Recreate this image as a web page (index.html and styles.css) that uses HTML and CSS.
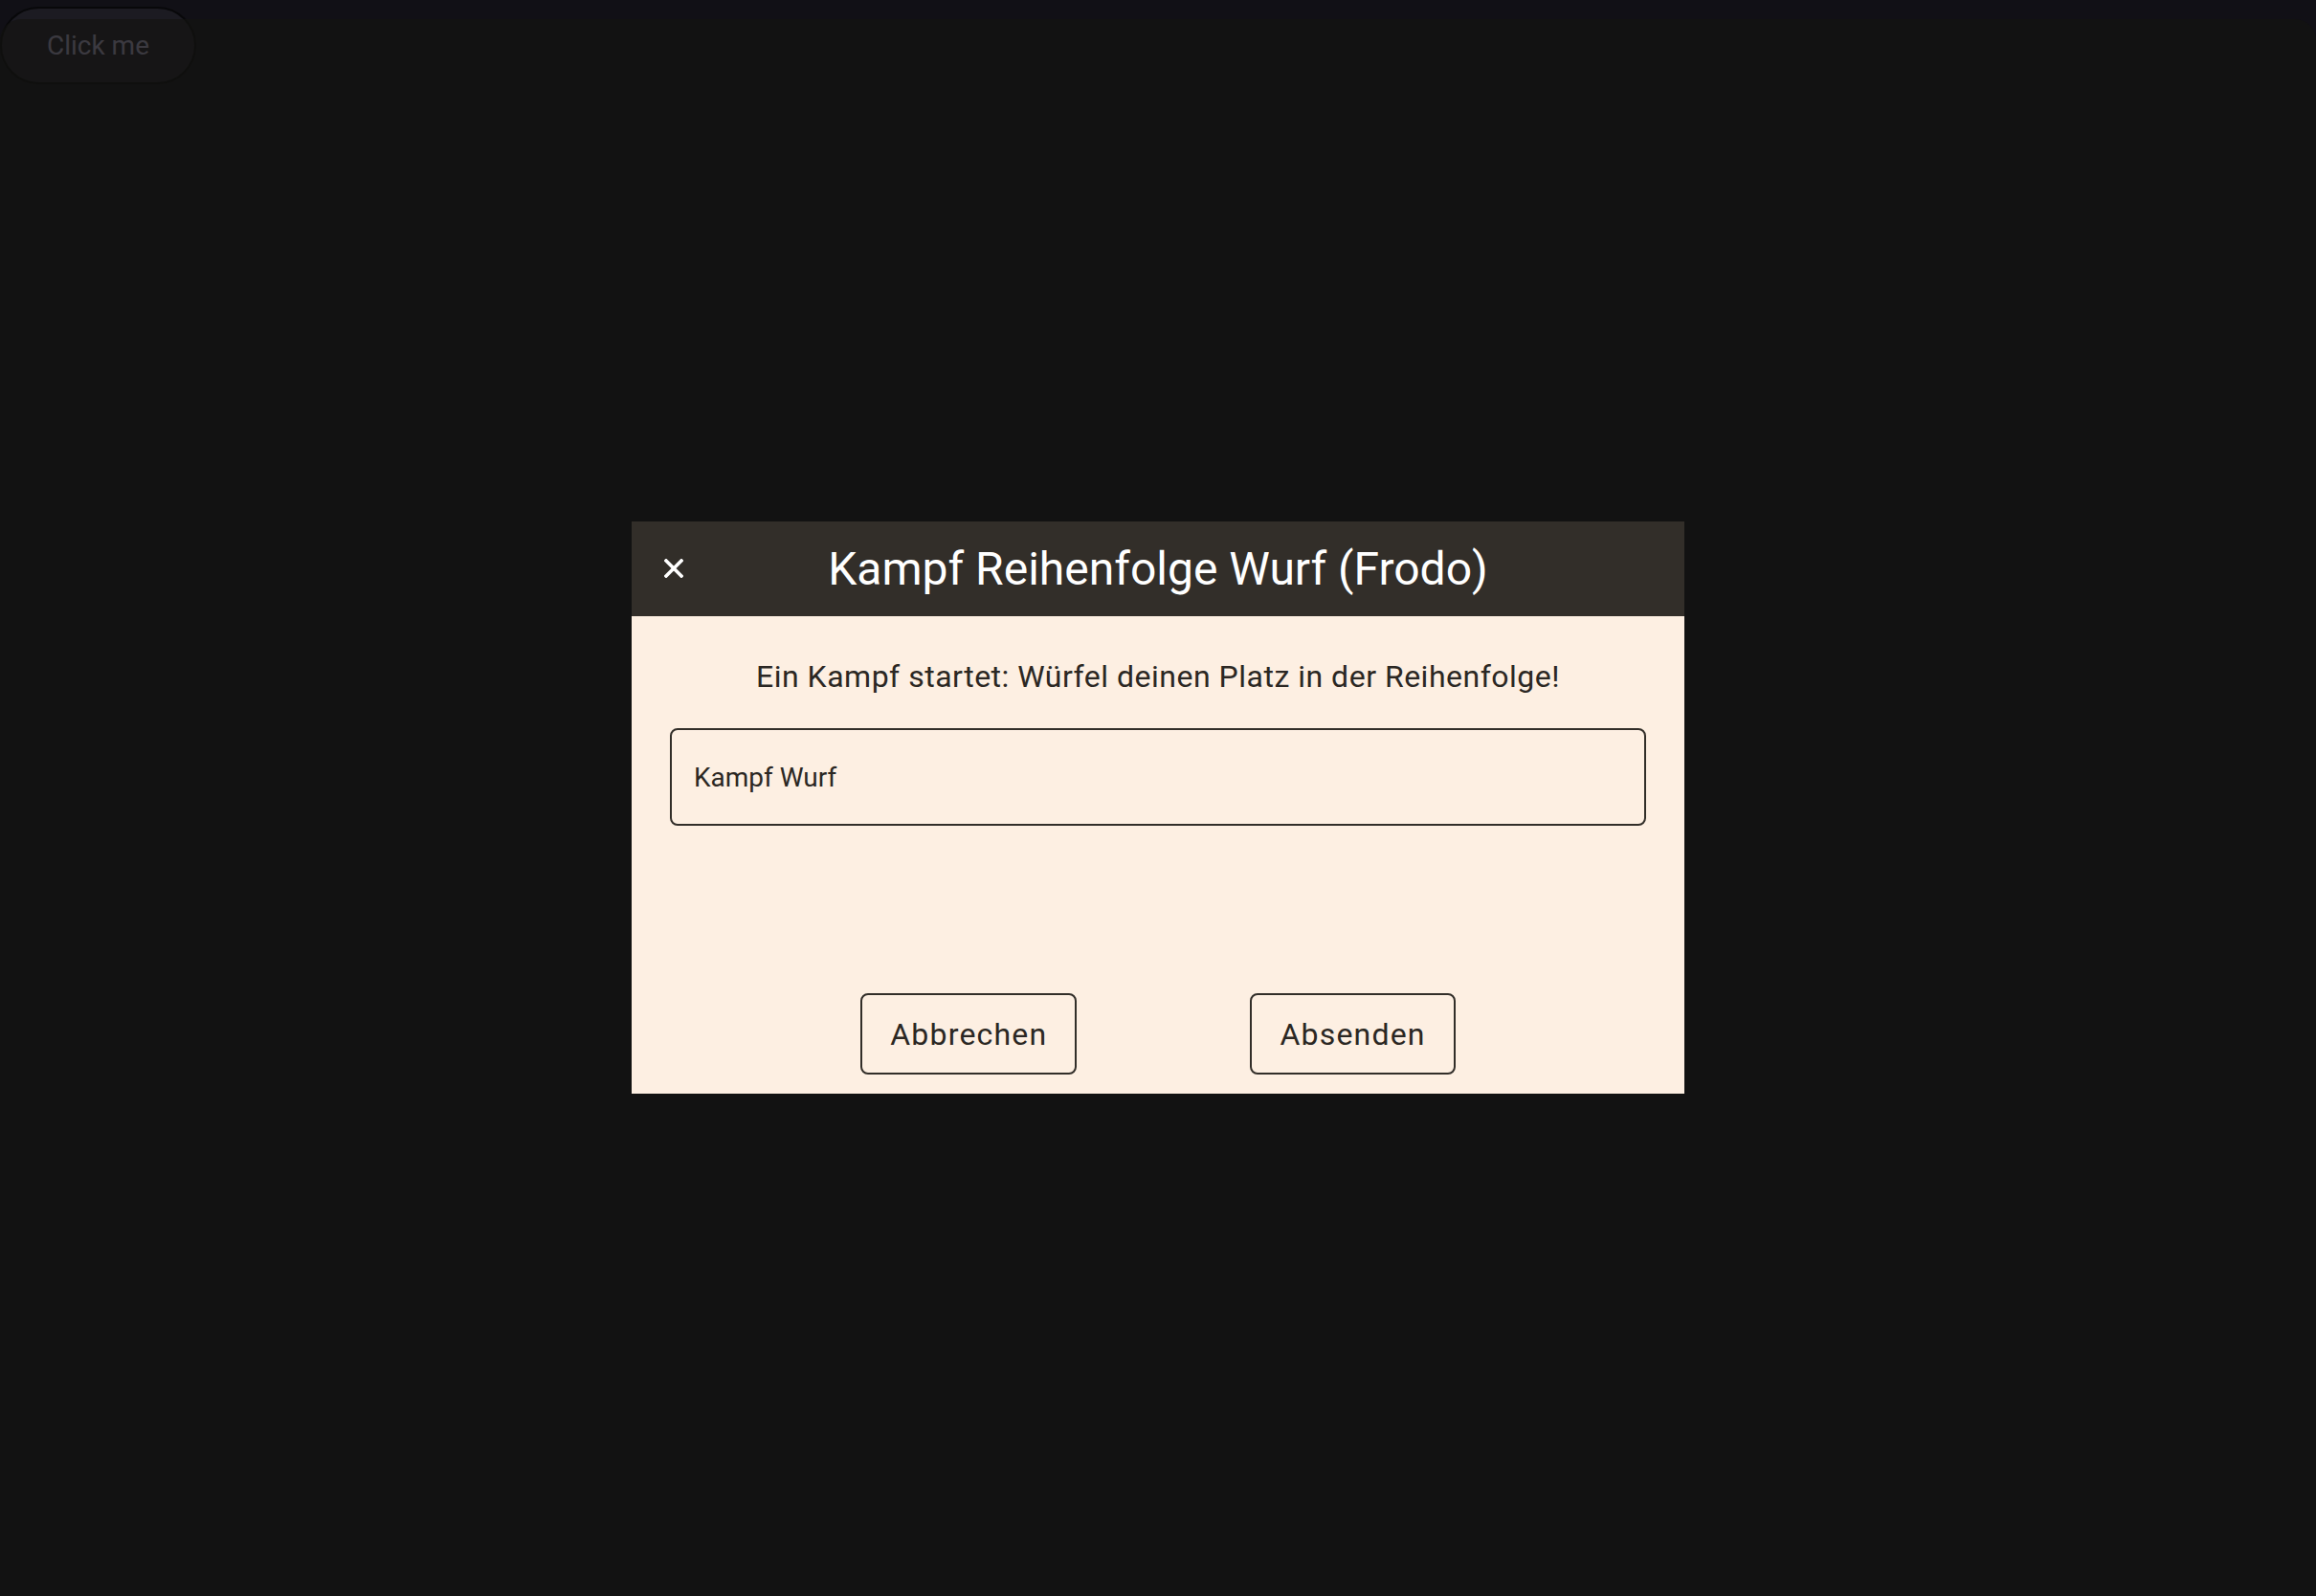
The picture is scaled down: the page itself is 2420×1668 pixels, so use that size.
FILE: index.html
```html
<!DOCTYPE html>
<html lang="de">
<head>
<meta charset="utf-8">
<title>Kampf Reihenfolge Wurf</title>
<link rel="stylesheet" href="styles.css">
</head>
<body>
<button class="trigger">Click me</button>
<div class="backdrop">
  <div class="dialog">
    <div class="dialog-header">
      <button class="close" aria-label="Schließen">
        <svg width="20" height="20" viewBox="0 0 20 20"><path d="M2 2 L18 18 M18 2 L2 18" stroke="#ffffff" stroke-width="3.6" stroke-linecap="square" fill="none"/></svg>
      </button>
      <h1 class="title">Kampf Reihenfolge Wurf (Frodo)</h1>
    </div>
    <div class="dialog-body">
      <p class="message">Ein Kampf startet: Würfel deinen Platz in der Reihenfolge!</p>
      <div class="field">Kampf Wurf</div>
      <div class="actions">
        <button class="action">Abbrechen</button>
        <button class="action">Absenden</button>
      </div>
    </div>
  </div>
</div>
</body>
</html>
```
FILE: styles.css
```css
html, body {
  margin: 0;
  padding: 0;
  height: 100%;
}
body {
  background: #111016;
  font-family: Roboto, "Liberation Sans", sans-serif;
}
.trigger {
  margin: 7px 0 0 0;
  width: 205px;
  height: 81px;
  border-radius: 41px;
  border: 2px solid #08080a;
  background: #1c1b22;
  color: #8c87a0;
  font-family: Roboto, "Liberation Sans", sans-serif;
  font-size: 28px;
  padding: 0;
  display: block;
}
.backdrop {
  position: fixed;
  top: 20px;
  left: 0;
  right: 0;
  bottom: 0;
  border-radius: 22px 22px 0 0;
  background: rgba(20, 20, 17, 0.67);
  display: flex;
  justify-content: center;
  align-items: flex-start;
  padding-top: 525px;
  box-sizing: border-box;
}
.dialog {
  width: 1100px;
  height: 598px;
  background: #fdefe2;
  display: flex;
  flex-direction: column;
}
.dialog-header {
  height: 99px;
  background: #322e29;
  display: flex;
  align-items: center;
  justify-content: center;
  position: relative;
}
.close {
  position: absolute;
  left: 34px;
  top: 39px;
  width: 20px;
  height: 20px;
  padding: 0;
  border: 0;
  background: transparent;
  display: block;
}
.close svg { display: block; }
.title {
  margin: 0;
  color: #ffffff;
  font-weight: 400;
  font-size: 48px;
  line-height: 56px;
}
.dialog-body {
  flex: 1;
  display: flex;
  flex-direction: column;
  padding: 44px 40px 20px;
}
.message {
  margin: 0;
  text-align: center;
  color: #2b2723;
  font-size: 32px;
  letter-spacing: 0.5px;
  line-height: 38px;
}
.field {
  margin-top: 35px;
  height: 102px;
  box-sizing: border-box;
  border: 2px solid #322e29;
  border-radius: 8px;
  display: flex;
  align-items: center;
  padding-left: 23px;
  color: #2b2723;
  font-size: 28px;
}
.actions {
  margin-top: auto;
  display: flex;
  justify-content: center;
  gap: 181px;
}
.action {
  height: 85px;
  padding: 0 29px;
  border: 2px solid #322e29;
  border-radius: 8px;
  background: transparent;
  color: #2b2723;
  font-family: Roboto, "Liberation Sans", sans-serif;
  font-size: 32px;
  letter-spacing: 1.2px;
}
```
